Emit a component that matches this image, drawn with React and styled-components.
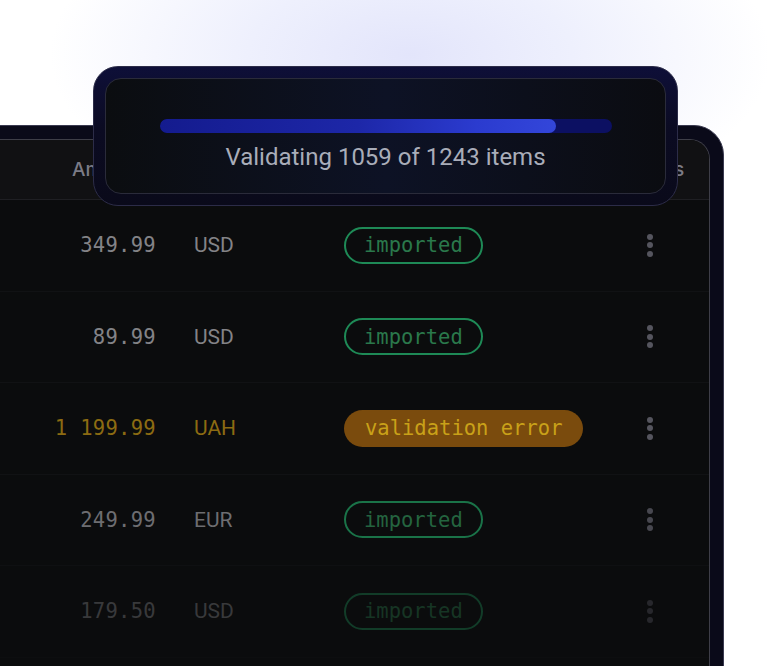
import styled, { createGlobalStyle } from "styled-components";

const GlobalStyle = createGlobalStyle`
  html, body {
    margin: 0;
    padding: 0;
    background: #ffffff;
    overflow: hidden;
  }
`;

const Page = styled.div`
  position: relative;
  width: 768px;
  height: 666px;
  overflow: hidden;
  padding-top: 125px;
  box-sizing: border-box;
  background: radial-gradient(
    ellipse 360px 175px at 410px 55px,
    #e3e5fb 0%,
    #eef0fd 45%,
    #ffffff 100%
  );
`;

const Frame = styled.div`
  margin-left: -40px;
  width: 764px;
  height: 620px;
  box-sizing: border-box;
  padding: 13px 13px 0 14px;
  background: #0a0a19;
  border: 1px solid #3a3a50;
  border-radius: 30px;
`;

const Panel = styled.div`
  height: 100%;
  box-sizing: border-box;
  background: #0b0c0d;
  border: 1px solid #3e3e48;
  border-bottom: none;
  border-radius: 20px 20px 0 0;
  overflow: hidden;
`;

const Grid = styled.div`
  display: grid;
  grid-template-columns: 180px 188px 1fr 80px;
  padding-right: 19px;
  align-items: center;
`;

const Header = styled(Grid)`
  height: 59px;
  background: #111113;
  border-bottom: 1px solid #1f1f23;
  font-family: Inter, "Noto Sans", sans-serif;
  font-size: 19px;
  font-weight: 500;
  color: #7b7b86;
`;

const HeadCell = styled.div`
  padding-left: ${(p) => p.$pad || 0}px;
  text-align: ${(p) => p.$align || "left"};
`;

const Row = styled(Grid)`
  height: 90.5px;
  border-bottom: 1px solid #111214;
  opacity: ${(p) => p.$fade};
  font-family: "DejaVu Sans Mono", "Liberation Mono", monospace;
  font-size: 20.5px;
  color: ${(p) => (p.$warn ? "#8c6b12" : "#838387")};
`;

const Amount = styled.div`
  text-align: right;
  letter-spacing: 0.3px;
`;

const Currency = styled.div`
  padding-left: 38px;
  font-family: Roboto, "Noto Sans", sans-serif;
  font-size: 21px;
`;

const Badge = styled.span`
  justify-self: start;
  display: inline-flex;
  align-items: center;
  height: 37px;
  box-sizing: border-box;
  padding: 0 ${(p) => (p.$error ? 21 : 18)}px;
  border-radius: 19px;
  font-family: "DejaVu Sans Mono", "Liberation Mono", monospace;
  font-size: 20.5px;
  border: ${(p) => (p.$error ? "none" : "2px solid #1e8a56")};
  background: ${(p) => (p.$error ? "#7a4b0d" : "transparent")};
  color: ${(p) => (p.$error ? "#c9a119" : "#2a784b")};
`;

const Kebab = styled.div`
  justify-self: center;
  display: flex;
  flex-direction: column;
  gap: 2.5px;

  span {
    width: 6px;
    height: 6px;
    border-radius: 50%;
    background: #55555e;
  }
`;

const Overlay = styled.div`
  position: absolute;
  left: 93px;
  top: 66px;
  width: 585px;
  height: 140px;
  box-sizing: border-box;
  padding: 11px;
  border: 1.5px solid #2c2c48;
  border-radius: 25px;
  background: linear-gradient(180deg, #0e0f38 0%, #0b0b22 45%, #0a0a1a 100%);
`;

const OverlayInner = styled.div`
  height: 100%;
  box-sizing: border-box;
  border: 1px solid #2a2b3a;
  border-radius: 16px;
  background: linear-gradient(90deg, #0b0d10 0%, #0d1225 50%, #0b0c11 100%);
  display: flex;
  flex-direction: column;
  align-items: center;
  padding-top: 40px;
`;

const Track = styled.div`
  width: 452px;
  height: 14px;
  border-radius: 7px;
  background: #0c1062;
  overflow: hidden;
`;

const Fill = styled.div`
  height: 100%;
  border-radius: 7px;
  background: linear-gradient(90deg, #141b8e 0%, #1d27a8 50%, #2b3bcf 80%, #3346da 100%);
`;

const Status = styled.div`
  margin-top: 10px;
  font-family: Roboto, Inter, sans-serif;
  font-size: 24px;
  color: #a9adb9;
  line-height: 28px;
`;

const rows = [
  { amount: "349.99", cur: "USD", status: "imported", fade: 1 },
  { amount: "89.99", cur: "USD", status: "imported", fade: 1 },
  { amount: "1 199.99", cur: "UAH", status: "validation error", fade: 1, warn: true },
  { amount: "249.99", cur: "EUR", status: "imported", fade: 0.82 },
  { amount: "179.50", cur: "USD", status: "imported", fade: 0.38 },
];

export default function App() {
  const done = 1059;
  const total = 1243;
  return (
    <Page>
      <GlobalStyle />
      <Frame>
        <Panel>
          <Header>
            <HeadCell $pad={96}>Amount</HeadCell>
            <HeadCell $pad={38}>Currency</HeadCell>
            <HeadCell>Status</HeadCell>
            <HeadCell $align="center">Actions</HeadCell>
          </Header>
          {rows.map((r) => (
            <Row key={r.amount} $fade={r.fade} $warn={r.warn}>
              <Amount>{r.amount}</Amount>
              <Currency>{r.cur}</Currency>
              <Badge $error={r.warn}>{r.status}</Badge>
              <Kebab>
                <span />
                <span />
                <span />
              </Kebab>
            </Row>
          ))}
        </Panel>
      </Frame>
      <Overlay>
        <OverlayInner>
          <Track>
            <Fill style={{ width: `${(396 / 452) * 100}%` }} />
          </Track>
          <Status>
            Validating {done} of {total} items
          </Status>
        </OverlayInner>
      </Overlay>
    </Page>
  );
}
